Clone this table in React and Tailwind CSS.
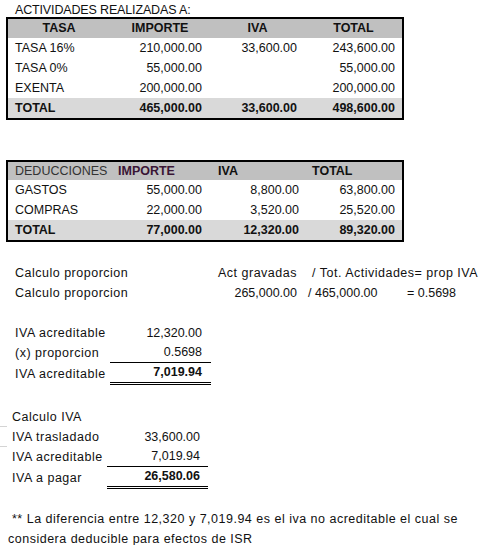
const font = { fontFamily: '"Liberation Sans", Arial, sans-serif' }

function Row({ cols, cells, className = '' }) {
  return (
    <div className={`grid h-[20px] items-center ${cols} ${className}`}>
      {cells}
    </div>
  )
}

export default function App() {
  const t1 = 'grid-cols-[102px_100px_95px_97px]'
  const lc = 'tracking-[0.5px]'
  return (
    <div className="w-[490px] h-[545px] bg-white text-[12.5px] text-[#111] overflow-hidden" style={font}>
      {/* Actividades */}
      <div className="h-[17px] pt-[4px] pl-[15px] leading-[13px] tracking-[-0.15px]">ACTIVIDADES REALIZADAS A:</div>
      <div className="ml-[6px] w-[398px] border-2 border-black">
        <div className={`grid h-[19px] items-center bg-[#c0c0c0] font-bold ${t1}`}>
          <span className="text-center">TASA</span>
          <span className="text-center">IMPORTE</span>
          <span className="text-center">IVA</span>
          <span className="text-center">TOTAL</span>
        </div>
        {[
          ['TASA 16%', '210,000.00', '33,600.00', '243,600.00'],
          ['TASA 0%', '55,000.00', '', '55,000.00'],
          ['EXENTA', '200,000.00', '', '200,000.00'],
        ].map(r => (
          <Row key={r[0]} cols={t1} cells={<>
            <span className="pl-[7px]">{r[0]}</span>
            <span className="text-right pr-[8px]">{r[1]}</span>
            <span className="text-right pr-[8px]">{r[2]}</span>
            <span className="text-right pr-[7px]">{r[3]}</span>
          </>} />
        ))}
        <Row cols={t1} className="bg-[#d9d9d9] font-bold" cells={<>
          <span className="pl-[7px]">TOTAL</span>
          <span className="text-right pr-[8px]">465,000.00</span>
          <span className="text-right pr-[8px]">33,600.00</span>
          <span className="text-right pr-[7px]">498,600.00</span>
        </>} />
      </div>

      {/* Deducciones */}
      <div className="mt-[40px] ml-[6px] w-[398px] border-2 border-black">
        <div className={`grid h-[18px] items-center bg-[#c0c0c0] ${t1}`}>
          <span className="pl-[7px] text-[#333]">DEDUCCIONES</span>
          <span className="pl-[8px] font-bold text-[#3a1535]">IMPORTE</span>
          <span className="pl-[8px] font-bold">IVA</span>
          <span className="pl-[7px] font-bold">TOTAL</span>
        </div>
        {[
          ['GASTOS', '55,000.00', '8,800.00', '63,800.00'],
          ['COMPRAS', '22,000.00', '3,520.00', '25,520.00'],
        ].map(r => (
          <Row key={r[0]} cols={t1} cells={<>
            <span className="pl-[7px]">{r[0]}</span>
            <span className="text-right pr-[8px]">{r[1]}</span>
            <span className="text-right pr-[6px]">{r[2]}</span>
            <span className="text-right pr-[7px]">{r[3]}</span>
          </>} />
        ))}
        <Row cols={t1} className="bg-[#d9d9d9] font-bold" cells={<>
          <span className="pl-[7px]">TOTAL</span>
          <span className="text-right pr-[8px]">77,000.00</span>
          <span className="text-right pr-[6px]">12,320.00</span>
          <span className="text-right pr-[7px]">89,320.00</span>
        </>} />
      </div>

      {/* Proporcion */}
      <div className="mt-[21px] whitespace-nowrap">
        <Row cols="grid-cols-[210px_95px_97px_88px]" cells={<>
          <span className={`pl-[15px] ${lc}`}>Calculo proporcion</span>
          <span className={`pl-[8px] ${lc}`}>Act gravadas</span>
          <span className={`pl-[7px] ${lc}`}>/ Tot. Actividades= prop IVA</span>
          <span />
        </>} />
        <Row cols="grid-cols-[210px_95px_97px_88px]" cells={<>
          <span className={`pl-[15px] ${lc}`}>Calculo proporcion</span>
          <span className="text-right pr-[8px]">265,000.00</span>
          <span className="pl-[3px]">/ 465,000.00</span>
          <span className="pl-[5px]">= 0.5698</span>
        </>} />
      </div>

      {/* IVA acreditable */}
      <div className="mt-[20px] w-[211px] whitespace-nowrap">
        <Row cols="grid-cols-[110px_101px]" cells={<>
          <span className={`pl-[15px] ${lc}`}>IVA acreditable</span>
          <span className="text-right pr-[9px]">12,320.00</span>
        </>} />
        <Row cols="grid-cols-[110px_101px]" cells={<>
          <span className={`pl-[15px] ${lc}`}>(x) proporcion</span>
          <span className="h-full flex items-center justify-end pr-[9px] border-b border-black">0.5698</span>
        </>} />
        <Row cols="grid-cols-[110px_101px]" cells={<>
          <span className={`pl-[15px] ${lc}`}>IVA acreditable</span>
          <span className="h-full flex items-center justify-end pr-[9px] border-b-[3px] border-double border-black font-bold">7,019.94</span>
        </>} />
      </div>

      {/* Calculo IVA */}
      <div className="mt-[24px] w-[208px] whitespace-nowrap">
        <Row cols="grid-cols-[7px_100px_101px]" cells={<>
          <span className="h-full border-b border-[#d4d4d4]" />
          <span className={`pl-[5px] ${lc}`}>Calculo IVA</span>
          <span />
        </>} />
        <Row cols="grid-cols-[7px_100px_101px]" cells={<>
          <span className="h-full border-b border-[#d4d4d4]" />
          <span className={`pl-[5px] ${lc}`}>IVA trasladado</span>
          <span className="text-right pr-[8px]">33,600.00</span>
        </>} />
        <Row cols="grid-cols-[7px_100px_101px]" cells={<>
          <span />
          <span className={`pl-[5px] ${lc}`}>IVA acreditable</span>
          <span className="h-full flex items-center justify-end pr-[8px] border-b border-black">7,019.94</span>
        </>} />
        <Row cols="grid-cols-[7px_100px_101px]" cells={<>
          <span />
          <span className={`pl-[5px] ${lc}`}>IVA a pagar</span>
          <span className="h-full flex items-center justify-end pr-[8px] border-b-[3px] border-double border-black font-bold">26,580.06</span>
        </>} />
      </div>

      {/* Nota */}
      <div className={`mt-[22px] whitespace-nowrap ${lc}`}>
        <div className="h-[20px] leading-[20px] pl-[12px]">** La diferencia entre 12,320 y 7,019.94 es el iva no acreditable el cual se</div>
        <div className="h-[20px] leading-[20px] pl-[8px]">considera deducible para efectos de ISR</div>
      </div>
    </div>
  )
}
